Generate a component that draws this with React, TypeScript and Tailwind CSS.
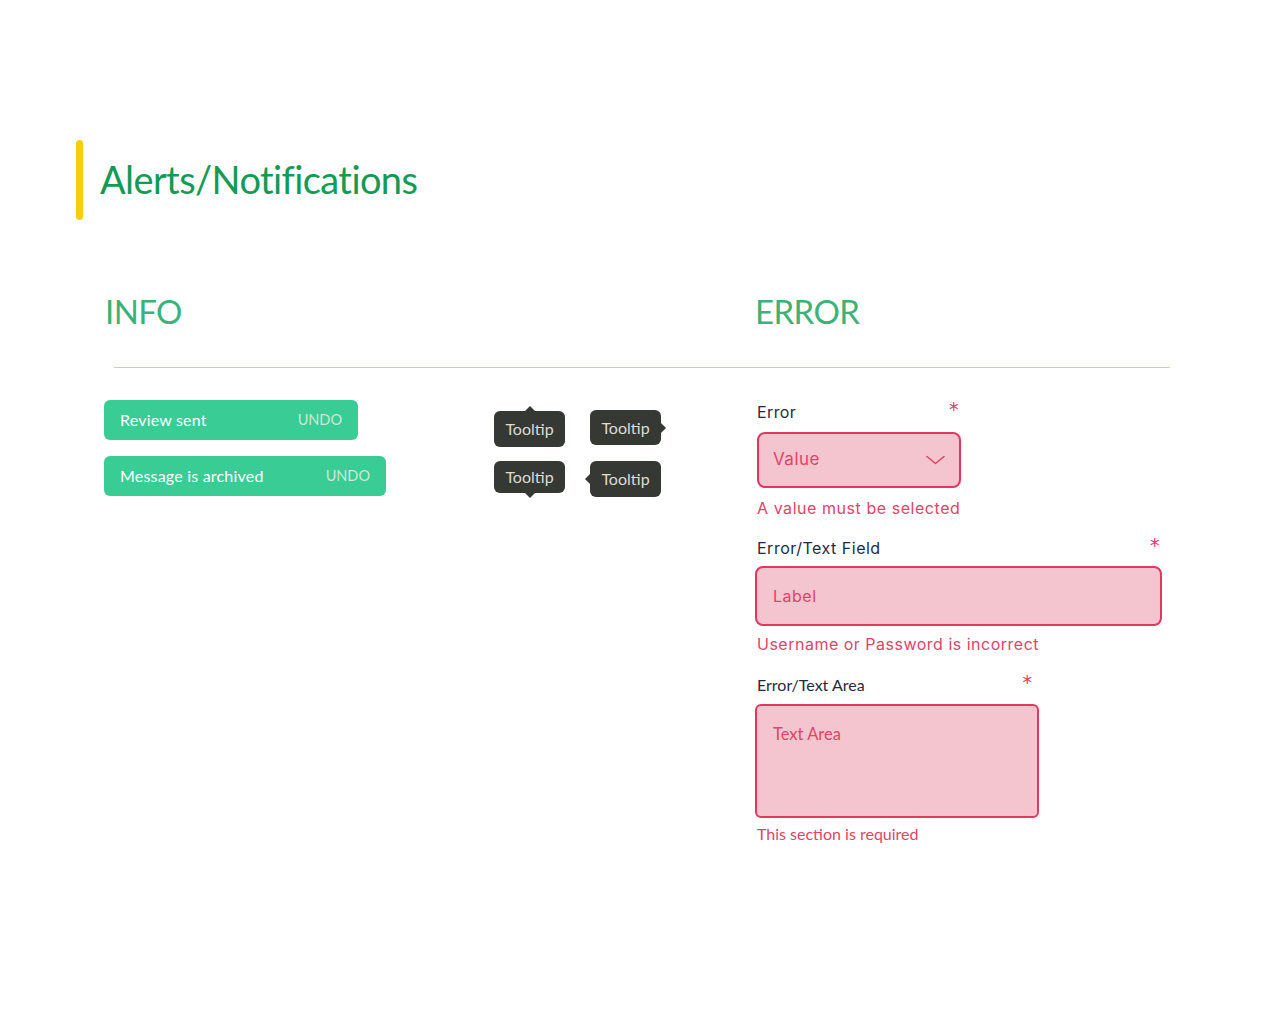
import { ReactNode } from "react";

const avenir = "font-['Lato','Open_Sans',sans-serif]";
const mont = "font-['Inter','Noto_Sans',sans-serif]";

function Toast({ text, width }: { text: string; width: string }) {
  return (
    <div className={`${width} h-[40px] rounded-[6px] bg-[#3acc95] flex items-center justify-between px-4 ${avenir}`}>
      <span className="text-white text-[16px] tracking-[0.2px] -mt-[1px]">{text}</span>
      <span className="text-[#cbe9d8] text-[14.5px]">UNDO</span>
    </div>
  );
}

function Tooltip({ side, h }: { side: "top" | "right" | "bottom" | "left"; h: string }) {
  return (
    <div className={`relative w-[71px] ${h} rounded-[6px] bg-[#363833] flex items-center justify-center text-[16px] text-[#dcdcd8] ${avenir}`}>
      Tooltip
      {side === "top" && (
        <span className="absolute left-1/2 -top-[5px] -translate-x-1/2 w-0 h-0 border-x-[6px] border-x-transparent border-b-[6px] border-b-[#363833]" />
      )}
      {side === "bottom" && (
        <span className="absolute left-1/2 -bottom-[5px] -translate-x-1/2 w-0 h-0 border-x-[6px] border-x-transparent border-t-[6px] border-t-[#363833]" />
      )}
      {side === "right" && (
        <span className="absolute top-1/2 -right-[5px] -translate-y-1/2 w-0 h-0 border-y-[6px] border-y-transparent border-l-[6px] border-l-[#363833]" />
      )}
      {side === "left" && (
        <span className="absolute top-1/2 -left-[5px] -translate-y-1/2 w-0 h-0 border-y-[6px] border-y-transparent border-r-[6px] border-r-[#363833]" />
      )}
    </div>
  );
}

function Label({ children, width, cls, starPad = "pr-[2px]" }: { children: ReactNode; width: string; cls: string; starPad?: string }) {
  return (
    <div className={`${width} h-[24px] flex items-center justify-between ${cls} text-[#1f2a44]`}>
      <span>{children}</span>
      <span className={`font-['DejaVu_Sans',sans-serif] text-[#e0386a] text-[19px] leading-none ${starPad} -mt-[6px]`}>*</span>
    </div>
  );
}

export default function App() {
  return (
    <div className="min-h-screen bg-white pt-[140px] pb-[150px]">
      <div className="flex items-center pl-[76px]">
        <div className="w-[7px] h-[80px] rounded-full bg-[#f2cf10]" />
        <h1 className={`ml-[17px] -mt-[3px] text-[38px] leading-none tracking-[-0.6px] text-[#139a55] ${avenir}`}>Alerts/Notifications</h1>
      </div>

      <div className={`flex mt-[75px] text-[33px] leading-none tracking-[-0.6px] text-[#3bb27a] ${avenir}`}>
        <h2 className="pl-[105px] w-[755px]">INFO</h2>
        <h2>ERROR</h2>
      </div>

      <div className="ml-[114px] w-[1056px] h-px bg-[#e6cf72] mt-[39px]" />

      <div className="flex mt-[32px]">
        <div className="pl-[104px] w-[494px] flex flex-col gap-4">
          <Toast text="Review sent" width="w-[254px]" />
          <Toast text="Message is archived" width="w-[282px]" />
        </div>

        <div className="w-[261px] pt-[11px] grid grid-cols-[71px_71px] gap-x-[25px] gap-y-[14px] content-start">
          <Tooltip side="top" h="h-[36px]" />
          <div className="-mt-[1px]">
            <Tooltip side="right" h="h-[35px]" />
          </div>
          <Tooltip side="bottom" h="h-[32px]" />
          <Tooltip side="left" h="h-[36px]" />
        </div>

        <div className="flex flex-col">
          <div className="pl-[2px]">
            <Label width="w-[204px]" cls={`${mont} text-[16px] tracking-[0.4px]`}>Error</Label>
            <div className={`mt-[8px] w-[204px] h-[56px] rounded-[8px] border-2 border-[#e0385e] bg-[#f5c5cf] flex items-center justify-between pl-[14px] pr-[14px] ${mont} text-[17px] tracking-[0.5px] text-[#e04468]`}>
              <span>Value</span>
              <svg width="19" height="10" viewBox="0 0 19 10" fill="none">
                <path d="M1 1.5 L9.5 8.5 L18 1.5" stroke="#e04468" strokeWidth="1.6" strokeLinecap="round" strokeLinejoin="round" />
              </svg>
            </div>
            <div className={`mt-[10px] h-[20px] flex items-center ${mont} text-[16px] tracking-[0.55px] text-[#e04468]`}>A value must be selected</div>
          </div>

          <div className="mt-[18px]">
            <Label width="w-[407px]" cls={`${mont} text-[16px] tracking-[0.5px] pl-[2px]`}>Error/Text Field</Label>
            <div className={`mt-[6px] w-[407px] h-[60px] rounded-[8px] border-2 border-[#e0385e] bg-[#f5c5cf] flex items-center pl-[16px] ${mont} text-[16px] tracking-[0.5px] text-[#e04468]`}>
              Label
            </div>
            <div className={`mt-[8px] pl-[2px] h-[20px] flex items-center ${mont} text-[16px] tracking-[0.5px] text-[#e04468]`}>Username or Password is incorrect</div>
          </div>

          <div className="mt-[19px]">
            <Label width="w-[284px]" cls={`${avenir} text-[16px] pl-[2px]`} starPad="pr-[7px]">Error/Text Area</Label>
            <div className={`mt-[7px] w-[284px] h-[114px] rounded-[6px] border-2 border-[#e0385e] bg-[#f5c5cf] pl-[16px] pt-[16px] ${avenir} text-[16.5px] text-[#e04468]`}>
              Text Area
            </div>
            <div className={`mt-[6px] pl-[2px] h-[20px] flex items-center ${avenir} text-[16px] text-[#e04468]`}>This section is required</div>
          </div>
        </div>
      </div>
    </div>
  );
}
